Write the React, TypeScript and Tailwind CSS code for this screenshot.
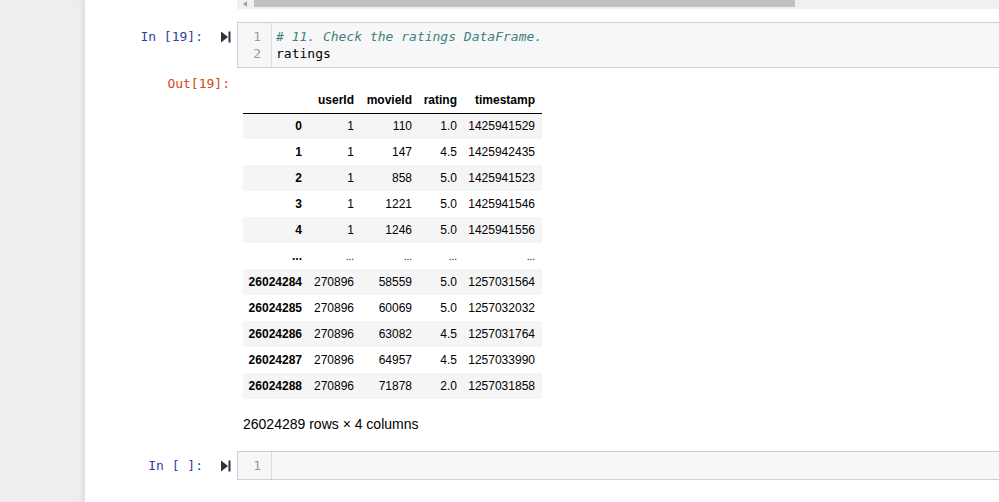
import React from "react";

const mono = { fontFamily: '"DejaVu Sans Mono", "Liberation Mono", monospace' };
const sans = { fontFamily: '"Liberation Sans", Arial, sans-serif' };

function RunIcon() {
  return (
    <svg width="10" height="12" viewBox="0 0 10 12">
      <path d="M0 0.5 L7 6 L0 11.5 Z" fill="#333" />
      <rect x="7.5" y="0.5" width="2" height="11" fill="#2b2f55" />
    </svg>
  );
}

const rows: [string, string, string, string, string][] = [
  ["0", "1", "110", "1.0", "1425941529"],
  ["1", "1", "147", "4.5", "1425942435"],
  ["2", "1", "858", "5.0", "1425941523"],
  ["3", "1", "1221", "5.0", "1425941546"],
  ["4", "1", "1246", "5.0", "1425941556"],
  ["...", "...", "...", "...", "..."],
  ["26024284", "270896", "58559", "5.0", "1257031564"],
  ["26024285", "270896", "60069", "5.0", "1257032032"],
  ["26024286", "270896", "63082", "4.5", "1257031764"],
  ["26024287", "270896", "64957", "4.5", "1257033990"],
  ["26024288", "270896", "71878", "2.0", "1257031858"],
];

const widths = ["w-[66px]", "w-[52px]", "w-[58px]", "w-[45px]", "w-[78px]"];

export default function App() {
  return (
    <div className="flex h-[502px] w-[999px] overflow-hidden bg-white">
      <div className="w-[85px] shrink-0 bg-[#eeeeee] shadow-[inset_-6px_0_6px_-4px_rgba(0,0,0,0.08)]" />
      <div className="flex-1 flex flex-col">
        {/* horizontal scrollbar */}
        <div className="ml-[152px] flex h-[9px] items-start bg-[#f0f0f0]">
          <div className="flex h-[8px] w-[17px] items-center justify-center">
            <svg width="5" height="6" viewBox="0 0 5 6">
              <path d="M4 0 L0 3 L4 6 Z" fill="#a3a3a3" />
            </svg>
          </div>
          <div className="h-[7px] w-[541px] bg-[#c1c1c1]" />
        </div>

        {/* cell 1 */}
        <div className="mt-[13px] flex items-start">
          <div className="w-[118px] shrink-0 pt-[6px] text-right text-[13px] leading-[17px] text-[#303f9f]" style={mono}>
            In [19]:
          </div>
          <div className="flex w-[34px] shrink-0 justify-end pr-[6px] pt-[9px]">
            <RunIcon />
          </div>
          <div className="mr-[-10px] flex flex-1 border border-[#cfcfcf] bg-[#f7f7f7]">
            <div className="w-[34px] shrink-0 border-r border-[#dddddd] py-[5px] pr-[10px] text-right text-[13px] leading-[17px] text-[#999999]" style={mono}>
              <div>1</div>
              <div>2</div>
            </div>
            <div className="py-[5px] pl-[4px] text-[13px] leading-[17px]" style={mono}>
              <div className="italic text-[#408080]"># 11. Check the ratings DataFrame.</div>
              <div className="text-[#000000]">ratings</div>
            </div>
          </div>
        </div>

        {/* output */}
        <div className="mt-[7px] flex items-start">
          <div className="w-[145px] shrink-0 text-right text-[13px] leading-[17px] text-[#d84315]" style={mono}>
            Out[19]:
          </div>
          <div className="ml-[13px] pt-[12px]" style={sans}>
            <table className="border-collapse text-[12px] text-black">
              <thead>
                <tr className="h-[26px] border-b border-black">
                  <th className={`${widths[0]} pr-[7px] text-right font-bold`}></th>
                  <th className={`${widths[1]} pr-[7px] text-right font-bold`}>userId</th>
                  <th className={`${widths[2]} pr-[7px] text-right font-bold`}>movieId</th>
                  <th className={`${widths[3]} pr-[7px] text-right font-bold`}>rating</th>
                  <th className={`${widths[4]} pr-[7px] text-right font-bold`}>timestamp</th>
                </tr>
              </thead>
              <tbody>
                {rows.map((r, i) => (
                  <tr key={i} className={`h-[26px] ${i % 2 === 0 ? "bg-[#f5f5f5]" : "bg-white"}`}>
                    {r.map((c, j) => (
                      <td
                        key={j}
                        className={`${widths[j]} pr-[7px] text-right ${j === 0 ? "font-bold" : ""} ${c === "..." && j !== 0 ? "text-[10px]" : ""}`}
                      >
                        {c}
                      </td>
                    ))}
                  </tr>
                ))}
              </tbody>
            </table>
            <div className="mt-[15px] text-[14px] leading-[20px] text-black">26024289 rows × 4 columns</div>
          </div>
        </div>

        {/* cell 2 */}
        <div className="mt-[17px] flex items-start">
          <div className="w-[118px] shrink-0 pt-[6px] text-right text-[13px] leading-[17px] text-[#303f9f]" style={mono}>
            In [ ]:
          </div>
          <div className="flex w-[34px] shrink-0 justify-end pr-[6px] pt-[9px]">
            <RunIcon />
          </div>
          <div className="mr-[-10px] flex flex-1 border border-[#cfcfcf] bg-[#f7f7f7]">
            <div className="w-[34px] shrink-0 border-r border-[#dddddd] py-[5px] pr-[10px] text-right text-[13px] leading-[17px] text-[#999999]" style={mono}>
              <div>1</div>
            </div>
            <div className="py-[5px] pl-[4px] text-[13px] leading-[17px]" style={mono}>
              <div>&nbsp;</div>
            </div>
          </div>
        </div>
      </div>
    </div>
  );
}
